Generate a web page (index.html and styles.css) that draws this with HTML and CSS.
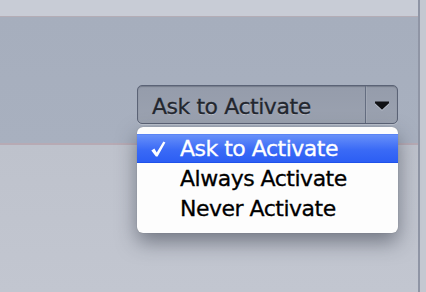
FILE: index.html
```html
<!DOCTYPE html>
<html>
<head>
<meta charset="utf-8">
<link rel="stylesheet" href="styles.css">
</head>
<body>
<div class="page">
  <div class="main">
    <div class="topbar"></div>
    <div class="band">
      <div class="popup">
        <span class="popup-label">Ask to Activate</span>
        <span class="popup-arrow">
          <svg width="14" height="9" viewBox="0 0 14 9"><polygon points="0,0.5 14,0.5 14,2.2 7,8.8 0,2.2" fill="#101114"/></svg>
        </span>
      </div>
    </div>
    <div class="lower"></div>
  </div>
  <div class="side"></div>
</div>
<div class="menu">
  <div class="item selected"><span class="check"><svg width="15" height="16" viewBox="0 0 15 16"><polygon points="0.3,9.4 3.4,7.6 5.7,11.6 12.4,0.6 14.4,1.6 6.6,15.4 4.9,15.4" fill="#ffffff"/></svg></span><span>Ask to Activate</span></div>
  <div class="item"><span class="check"></span><span>Always Activate</span></div>
  <div class="item"><span class="check"></span><span>Never Activate</span></div>
</div>
</body>
</html>
```
FILE: styles.css
```css
html, body {
  margin: 0;
  padding: 0;
}
body {
  width: 426px;
  height: 292px;
  overflow: hidden;
  font-family: "DejaVu Sans", "Liberation Sans", sans-serif;
  position: relative;
}
.page {
  display: flex;
  width: 426px;
  height: 292px;
}
.main {
  width: 418px;
  display: flex;
  flex-direction: column;
}
.side {
  flex: 1;
  border-left: 2px solid #8f95a5;
  background: #c4c8d1;
}
.topbar {
  height: 16px;
  background: #c8ccd6;
  border-bottom: 1px solid #b4adb6;
}
.band {
  height: 128px;
  background: linear-gradient(#a6aebd, #a8b0bf);
  border-bottom: 2px solid #b7aab4;
  display: flex;
  justify-content: flex-end;
  align-items: flex-start;
  padding: 68px 20px 0 0;
  box-sizing: border-box;
}
.lower {
  flex: 1;
  background: linear-gradient(#bec2cc, #c2c6d0);
}
.popup {
  width: 261px;
  height: 39px;
  box-sizing: border-box;
  border: 1px solid #5b6376;
  border-radius: 5px;
  background: linear-gradient(#959cab, #9ba2b0);
  box-shadow: inset 0 1px 1px rgba(60,66,80,0.35), 0 1px 0 rgba(255,255,255,0.25);
  display: flex;
}
.popup-label {
  flex: 1;
  padding: 4px 0 0 14px;
  line-height: 33px;
  font-size: 22px;
  letter-spacing: -0.45px;
  color: #23272f;
  -webkit-text-stroke: 0.3px #23272f;
  text-shadow: 0 1px 0 rgba(210,215,225,0.6);
  white-space: nowrap;
}
.popup-arrow {
  width: 32px;
  border-left: 1px solid #646d80;
  box-shadow: inset 1px 0 0 rgba(255,255,255,0.1);
  display: flex;
  align-items: center;
  justify-content: center;
  padding-top: 2px;
  box-sizing: border-box;
}
.popup-arrow svg {
  filter: drop-shadow(0 1px 0 rgba(220,225,235,0.6));
}
.menu {
  position: absolute;
  left: 137px;
  top: 127px;
  width: 261px;
  box-sizing: border-box;
  padding: 7px 0 9px;
  background: #fdfdfd;
  border-radius: 6px;
  box-shadow: 0 9px 20px rgba(40,45,60,0.5), 0 0 1px rgba(0,0,0,0.3);
}
.item {
  display: flex;
  height: 30px;
  line-height: 30px;
  font-size: 22px;
  letter-spacing: -0.5px;
  color: #000;
  -webkit-text-stroke: 0.3px #000;
  white-space: nowrap;
}
.item .check {
  width: 43px;
  flex: none;
  box-sizing: border-box;
  padding-left: 14px;
  display: flex;
  align-items: center;
  padding-top: 1px;
}
.item.selected {
  height: 29px;
  margin-bottom: 1px;
  background: linear-gradient(#6790f9, #3a6af6 55%, #2c5ef4);
  border-top: 1px solid #5a84f5;
  border-bottom: 1px solid #1f52ea;
  box-sizing: border-box;
  line-height: 27px;
  color: #ffffff;
  -webkit-text-stroke: 0.3px #ffffff;
}
```
